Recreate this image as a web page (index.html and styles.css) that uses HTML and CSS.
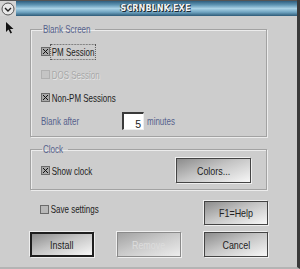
FILE: index.html
```html
<!DOCTYPE html>
<html lang="en">
  <head>
    <title>SCRNBLNK.EXE</title>
    <link rel="stylesheet" href="styles.css">
  </head>
  <body>
    <div class="window">
      <div class="titlebar">
        <div class="sysmenu">
          <svg width="14" height="14" viewBox="0 0 14 14">
            <circle cx="7" cy="7" r="6" fill="#e8e8e8" stroke="#555" stroke-width="1"/>
            <path d="M4 6 L7 9 L10 6" fill="none" stroke="#222" stroke-width="1.4"/>
          </svg>
        </div>
        <div class="caption"><span>SCRNBLNK.EXE</span></div>
      </div>

      <div class="client">
        <svg class="cursor" width="9" height="12" viewBox="0 0 9 12">
          <path d="M1 0 L1 10 L3.5 7.5 L5.5 11.5 L7 10.8 L5 7 L8.5 7 Z" fill="#111"/>
        </svg>

        <fieldset class="group blank">
          <legend><span class="t">Blank Screen</span></legend>
          <div class="row">
            <span class="check on"></span><span class="label"><span class="t focus">PM Session</span></span>
          </div>
          <div class="row">
            <span class="check off disabled"></span><span class="label"><span class="t dim">DOS Session</span></span>
          </div>
          <div class="row">
            <span class="check on"></span><span class="label"><span class="t">Non-PM Sessions</span></span>
          </div>
          <div class="row">
            <span class="blue after"><span class="t">Blank after</span></span>
            <span class="spin">5</span>
            <span class="blue"><span class="t">minutes</span></span>
          </div>
        </fieldset>

        <fieldset class="group clock">
          <legend><span class="t">Clock</span></legend>
          <div class="row split">
            <div class="row">
              <span class="check on"></span><span class="label"><span class="t">Show clock</span></span>
            </div>
            <button class="btn colors"><span class="bt">Colors...</span></button>
          </div>
        </fieldset>

        <div class="row split save">
          <div class="row tick">
            <span class="check off"></span><span class="label"><span class="t">Save settings</span></span>
          </div>
          <button class="btn"><span class="bt">F1=Help</span></button>
        </div>

        <div class="actions">
          <button class="btn default"><span class="bt">Install</span></button>
          <button class="btn" disabled><span class="bt">Remove</span></button>
          <button class="btn"><span class="bt">Cancel</span></button>
        </div>
      </div>
    </div>
  </body>
</html>
```

FILE: styles.css
```css
body {
  margin: 0;
  background-color: #cdcdcd;
  font-family: "Liberation Sans", sans-serif;
  font-size: 10.5px;
  line-height: 12px;
  color: #222;
}

.t {
  display: inline-block;
  white-space: nowrap;
  transform: scaleX(0.76);
  transform-origin: 0 50%;
}

.bt {
  display: inline-block;
  white-space: nowrap;
  transform: scaleX(0.85);
}

.window {
  width: 297px;
  height: 267px;
  border-right: 3px solid #3a3a3a;
  border-bottom: 2px solid #b4b4b4;
  background-color: #cdcdcd;
  display: flex;
  flex-direction: column;
}

.titlebar {
  height: 16px;
  display: flex;
  border-top: 1px solid #555;
  box-sizing: border-box;
}

.sysmenu {
  width: 16px;
  display: flex;
  align-items: center;
  justify-content: center;
  background-color: #d4d4d4;
}

.caption {
  flex: 1;
  display: flex;
  align-items: center;
  justify-content: center;
  padding-right: 2px;
  background: linear-gradient(#2f5f7f 0%, #5d93b2 25%, #a9d2e6 50%, #6fa3c0 75%, #2d5a78 100%);
}

.caption span {
  color: #f4f4f4;
  font-family: "DejaVu Sans", sans-serif;
  font-weight: bold;
  font-size: 8px;
  letter-spacing: 0.1px;
  text-shadow: 1px 1px 0 #1a2a35, -1px 0 0 #2a3a45;
}

.client {
  position: relative;
  flex: 1;
  padding: 7px 0 0 30px;
}

.cursor {
  position: absolute;
  left: 5px;
  top: 6px;
}

.group {
  width: 237px;
  margin: 0;
  padding: 0 0 0 10px;
  border: 1px solid #a2a2a2;
  box-shadow: inset 1px 1px 0 #ececec, 1px 1px 0 #ececec;
  box-sizing: border-box;
}

.group legend {
  padding: 0 1px;
  margin-left: 1px;
  color: #55618c;
}

.blank legend {
  width: 51px;
}

.clock legend {
  width: 24px;
}

.blank {
  height: 114px;
  padding-top: 5px;
}

.blank .row {
  height: 23px;
}

.clock {
  height: 47px;
  margin-top: 6px;
  padding-top: 3px;
  padding-right: 15px;
}

.row {
  display: flex;
  align-items: center;
}

.split {
  justify-content: space-between;
}

.check {
  width: 9px;
  height: 9px;
  box-sizing: border-box;
  border: 1px solid #6a6a6a;
  background-color: #a8a8a8;
  margin-right: 1px;
  position: relative;
}

.check.on::after {
  content: "";
  position: absolute;
  inset: 1px;
  background:
    linear-gradient(45deg, transparent 43%, #111 43%, #111 57%, transparent 57%),
    linear-gradient(-45deg, transparent 43%, #111 43%, #111 57%, transparent 57%);
}

.check.off {
  background-color: #b8b8b8;
}

.check.disabled {
  border-color: #b0b0b0;
  background-color: #c4c4c4;
}

.label .t {
  padding: 1px 1px;
}

.focus {
  outline: 1px dotted #555;
}

.dim {
  color: #a8a8a8;
  text-shadow: 1px 1px 0 #e6e6e6;
}

.blue {
  color: #55618c;
}

.after {
  width: 81px;
}

.spin {
  width: 22px;
  height: 18px;
  margin-right: 3px;
  box-sizing: border-box;
  background-color: #fff;
  border-top: 2px solid #3a3a3a;
  border-left: 2px solid #3a3a3a;
  border-right: 1px solid #eee;
  border-bottom: 1px solid #eee;
  text-align: right;
  padding: 4px 2px 0 0;
}

.btn {
  width: 64px;
  height: 24px;
  padding: 0;
  font-family: inherit;
  font-size: 10.5px;
  color: #222;
  border: 1px solid #444;
  background: linear-gradient(160deg, #8c8c8c 0%, #c4c4c4 45%, #f7f7f7 100%);
  box-shadow: 1px 1px 0 #efefef, -1px -1px 0 #efefef;
}

.btn:disabled {
  color: #dcdcdc;
  border-color: #8a8a8a;
  background: linear-gradient(160deg, #a2a2a2 0%, #c8c8c8 45%, #ececec 100%);
}

.btn.default {
  border: 2px solid #1e1e1e;
}

.colors {
  width: 75px;
  height: 25px;
}

.save {
  width: 238px;
  margin-top: 11px;
  padding-left: 10px;
  box-sizing: border-box;
  align-items: flex-start;
}

.tick {
  margin-top: 1px;
}

.actions {
  width: 238px;
  display: flex;
  justify-content: space-between;
  margin-top: 7px;
}

.actions .btn {
  height: 25px;
}
```
